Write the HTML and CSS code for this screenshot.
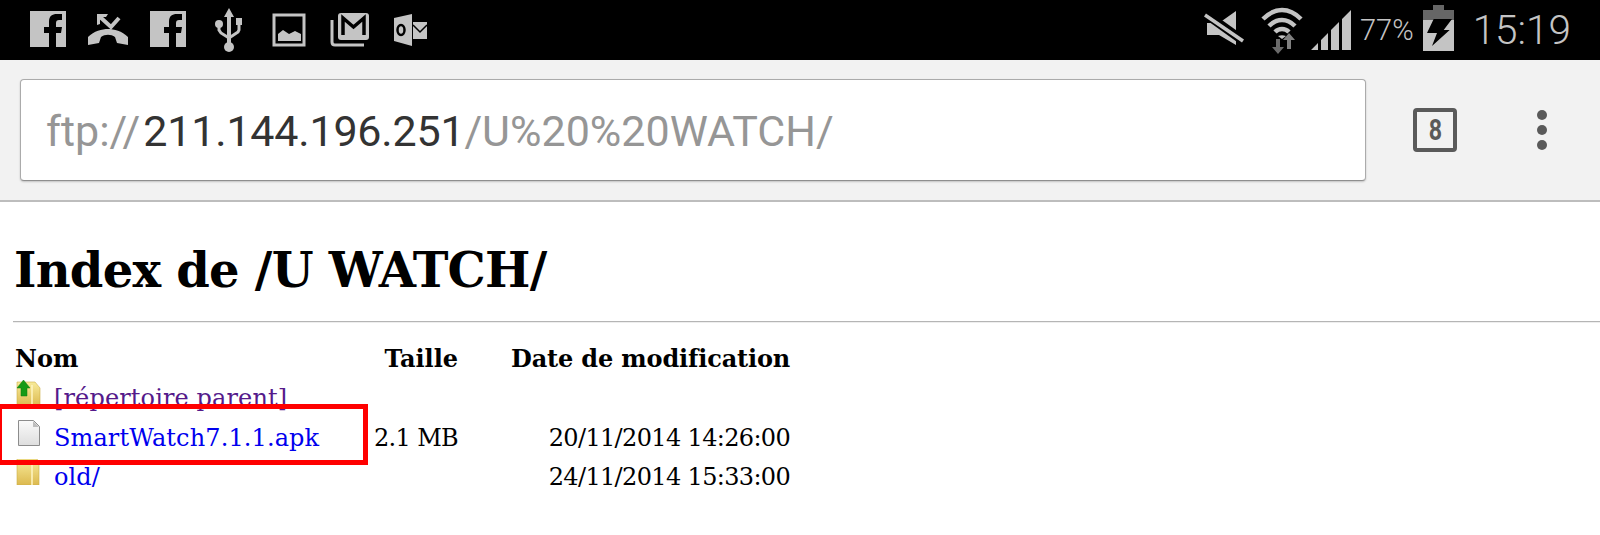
FILE: index.html
```html
<!DOCTYPE html>
<html lang="fr">
<head>
<meta charset="utf-8">
<title>Index de /U WATCH/</title>
<link rel="stylesheet" href="styles.css">
</head>
<body>
<header class="statusbar">
  <div class="notifs">
    <svg class="slot" viewBox="18 0 60 60"><path class="g" d="M30 11h36v36H30z"/><path class="k" d="M49 47V33h-5v-6h5v-5c0-6 3-8 8-8h5v6h-3c-2 0-3 1-3 3v4h6l-1 6h-5v14z"/></svg>
    <svg class="slot" viewBox="78 0 60 60"><path class="g" d="M88 45V37c6-6 14-8 20-8s14 2 20 8v8l-11-2-2-6c-4-3-10-3-14 0l-2 6z"/><path class="line call" d="M99 16l12 11 8-9"/><path class="g" d="M97 14h11l-2 3h-6v7l-3 1z"/></svg>
    <svg class="slot" viewBox="138 0 60 60"><path class="g" d="M150 11h36v36h-36z"/><path class="k" d="M169 47V33h-5v-6h5v-5c0-6 3-8 8-8h5v6h-3c-2 0-3 1-3 3v4h6l-1 6h-5v14z"/></svg>
    <svg class="slot" viewBox="198 0 60 60"><path class="g" d="M228 8l5 9h-3v27h-4V17h-3z"/><circle class="g" cx="228" cy="47" r="5"/><circle class="g" cx="218" cy="24" r="4"/><path class="g" d="M235 18h6v7h-6z"/><path class="line thin" d="M218 26v4l2 3 8 5M238 25v5l-1 2-9 6"/></svg>
    <svg class="slot" viewBox="258 0 60 60"><path class="line thin" d="M273 15h30v30h-30z"/><path class="g" d="M277 41v-7l5-4 6 4 6-3 6 3v7z"/></svg>
    <svg class="slot" viewBox="318 0 60 60"><path class="line thin" d="M331 20v22c0 2 1 3 3 3h29"/><rect class="g" x="337" y="13" width="31" height="27" rx="3"/><path class="mark" d="M342 35V18l10.500 9 10.500-9v17"/></svg>
    <svg class="slot" viewBox="378 0 60 60"><path class="g" d="M393 18l18-4v32l-18-5z"/><path class="g" d="M412 22h14v17h-14z"/><path class="chk" d="M412 25l7 7 7-7"/><ellipse class="ring" cx="400" cy="30" rx="3.500" ry="5"/></svg>
  </div>
  <div class="systray">
    <svg class="mute" viewBox="0 0 42 42"><path class="g" d="M3 14h12L32 2v34L15 26H3z"/><path class="cut" d="M-1 3l42 30"/><path class="slash" d="M1 6l38 26"/></svg>
    <svg class="wifi" viewBox="0 0 42 47"><path class="arc" d="M2 12c12-12 26-12 38 0"/><path class="arc" d="M8 19c8-8 18-8 26 0M14 25c4-4 10-4 14 0"/><path class="g" d="M17 29c3-1 5-1 8 0l-4 3z"/><path class="dim" d="M15 32h4v8h4l-6 7-6-7h4z"/><path class="dimup" d="M28 26l6 7h-4v9h-4v-9h-4z"/></svg>
    <svg class="signal" viewBox="0 0 41 41"><path class="g" d="M0 40l7-7v7zM10 40V30l7-7v17zM20 40V20l8-8v28zM31 40V9l9-9v40z"/></svg>
    <span class="pct">77%</span>
    <svg class="battery" viewBox="0 0 31 46"><path class="dimfill" d="M10 0h11v5h10v11H0V5h10z"/><path class="g" d="M0 15h31v31H0z"/><path class="k" d="M10.700 14H29l-8.300 11h6L9 41l5-13H4z"/></svg>
    <span class="clock">15:19</span>
  </div>
</header>

<nav class="toolbar">
  <div class="omnibox"><span class="faint scheme">ftp://</span><span class="host">211.144.196.251</span><span class="faint">/U%20%20WATCH/</span></div>
  <div class="tabcount"><span>8</span></div>
  <div class="menu"><i></i><i></i><i></i></div>
</nav>

<main class="listing">
  <h1>Index de /U WATCH/</h1>
  <hr>
  <table>
    <thead>
      <tr><th class="name">Nom</th><th class="size">Taille</th><th class="date">Date de modification</th></tr>
    </thead>
    <tbody>
      <tr>
        <td class="name"><svg class="ico" viewBox="0 0 26 26"><defs><linearGradient id="fg" x1="0" y1="0" x2="0" y2="1"><stop offset="0" stop-color="#f8eb9a"/><stop offset="1" stop-color="#dcb94f"/></linearGradient><linearGradient id="pg" x1="0" y1="0" x2="0" y2="1"><stop offset="0" stop-color="#fafafa"/><stop offset="1" stop-color="#dedede"/></linearGradient></defs><path class="fold" d="M2 2h18l5 6v18H2z"/><path class="spine" d="M17 5v21"/><path class="up" d="M8.500 0l6.500 8h-3v8H6V8H2z"/></svg><a class="visited" href="#">[répertoire parent]</a></td><td></td><td></td>
      </tr>
      <tr>
        <td class="name"><svg class="ico" viewBox="0 0 26 26"><path class="page" d="M3.500.500h15l6 6v19h-21z"/><path class="corner" d="M18 1v6h6z"/></svg><a href="#">SmartWatch7.1.1.apk</a></td><td class="size num">2.1 MB</td><td class="date num">20/11/2014 14:26:00</td>
      </tr>
      <tr>
        <td class="name"><svg class="ico" viewBox="0 0 26 26"><path class="fold" d="M2 0h20l2 3v23H2z"/><path class="spine" d="M17 2v24"/></svg><a href="#">old/</a></td><td></td><td class="date num">24/11/2014 15:33:00</td>
      </tr>
    </tbody>
  </table>
</main>
<div class="highlight"></div>
</body>
</html>
```
FILE: styles.css
```css
* { box-sizing: border-box; }
html, body { margin: 0; height: 535px; overflow: hidden; background: #fff; position: relative; }
body { font-family: "DejaVu Serif", "Liberation Serif", serif; color: #000; }

.statusbar { height: 60px; background: #000; display: flex; justify-content: space-between; color: #c4c4c4; font-family: Roboto, sans-serif; }
.notifs { display: flex; padding-left: 18px; gap: 0.2px; }
.slot { width: 60px; height: 60px; display: block; }
.g { fill: #c4c4c4; }
.k { fill: #000; }
.line { fill: none; stroke: #c4c4c4; stroke-width: 5; }
.call { stroke-width: 4; }
.thin { stroke-width: 3; }
.mark { fill: none; stroke: #000; stroke-width: 3.5; }
.chk { fill: none; stroke: #000; stroke-width: 1.5; }
.ring { fill: none; stroke: #000; stroke-width: 2.5; }
.systray { display: flex; align-items: center; padding-right: 29px; }
.mute { width: 42px; height: 42px; margin-right: 15px; }
.cut { stroke: #000; stroke-width: 9; }
.slash { stroke: #c4c4c4; stroke-width: 3.500; }
.wifi { width: 42px; height: 47px; margin-right: 8px; }
.arc { fill: none; stroke: #c4c4c4; stroke-width: 4.500; }
.dim { fill: #6a6a6a; }
.dimup { fill: #808080; }
.dimfill { fill: #666; }
.signal { width: 41px; height: 41px; margin-right: 8px; }
.pct { font-size: 29px; font-weight: 300; margin-right: 9px; }
.battery { width: 31px; height: 46px; margin: 0 19px 4px 0; }
.clock { font-size: 40.5px; font-weight: 300; }

.toolbar { height: 142px; background: #f2f2f2; border-bottom: 2px solid #bdbdbd; display: flex; align-items: center; padding: 0 0 1px 20px; }
.omnibox { width: 1346px; height: 102px; background: #fff; border: 1px solid #ababab; border-bottom-color: #8f8f8f; border-radius: 4px; box-shadow: 0 1px 2px rgba(0,0,0,.2); font-family: Roboto, sans-serif; font-size: 43px; line-height: 102px; padding-left: 25px; color: #333; white-space: nowrap; }
.faint { color: #969696; }
.scheme { margin-right: 3px; }
.host { letter-spacing: -.2px; }
.tabcount { width: 44px; height: 44px; margin-left: 47px; border: 4px solid #5a5a5a; border-radius: 4px; color: #5a5a5a; font: 700 29px/36px Roboto, sans-serif; text-align: center; }
.tabcount span { display: inline-block; transform: scaleX(.8); }
.menu { display: flex; flex-direction: column; gap: 5px; margin-left: 80px; }
.menu i { width: 10px; height: 10px; border-radius: 50%; background: #5a5a5a; }

.listing { padding: 0 13px; }
h1 { margin: 0 0 0 1px; padding-top: 35px; font-size: 48px; line-height: 66px; font-weight: 700; letter-spacing: -.75px; }
hr { margin: 18px 0 0; border: 0; border-top: 1px solid #b5b5b5; height: 2px; background: #eee; width: 1587px; }
table { border-collapse: collapse; font-size: 24px; margin-top: 21px; }
td, th { padding: 0; white-space: nowrap; vertical-align: baseline; }
td { height: 39.5px; }
th { height: 36px; }
.name { width: 361px; text-align: left; padding-left: 2px; }
.size { width: 84px; text-align: right; }
.date { width: 332px; text-align: right; }
th.date { letter-spacing: -.15px; }
.num { letter-spacing: -.65px; }
.ico { width: 26px; height: 26px; margin-right: 13px; vertical-align: baseline; }
.fold { fill: url(#fg); stroke: #cfae48; stroke-width: .6; }
.spine { stroke: #fff6c4; stroke-width: 1.5; }
.up { fill: #169a16; stroke: #0d7a0d; stroke-width: .5; }
.page { fill: url(#pg); stroke: #8c8c8c; }
.corner { fill: #bdbdbd; }
a { color: #0000ee; text-decoration: none; letter-spacing: .12px; }
a.visited { color: #551a8b; }
.highlight { position: absolute; left: -3px; top: 404px; width: 371px; height: 61px; border: 5px solid #f00; }
```
